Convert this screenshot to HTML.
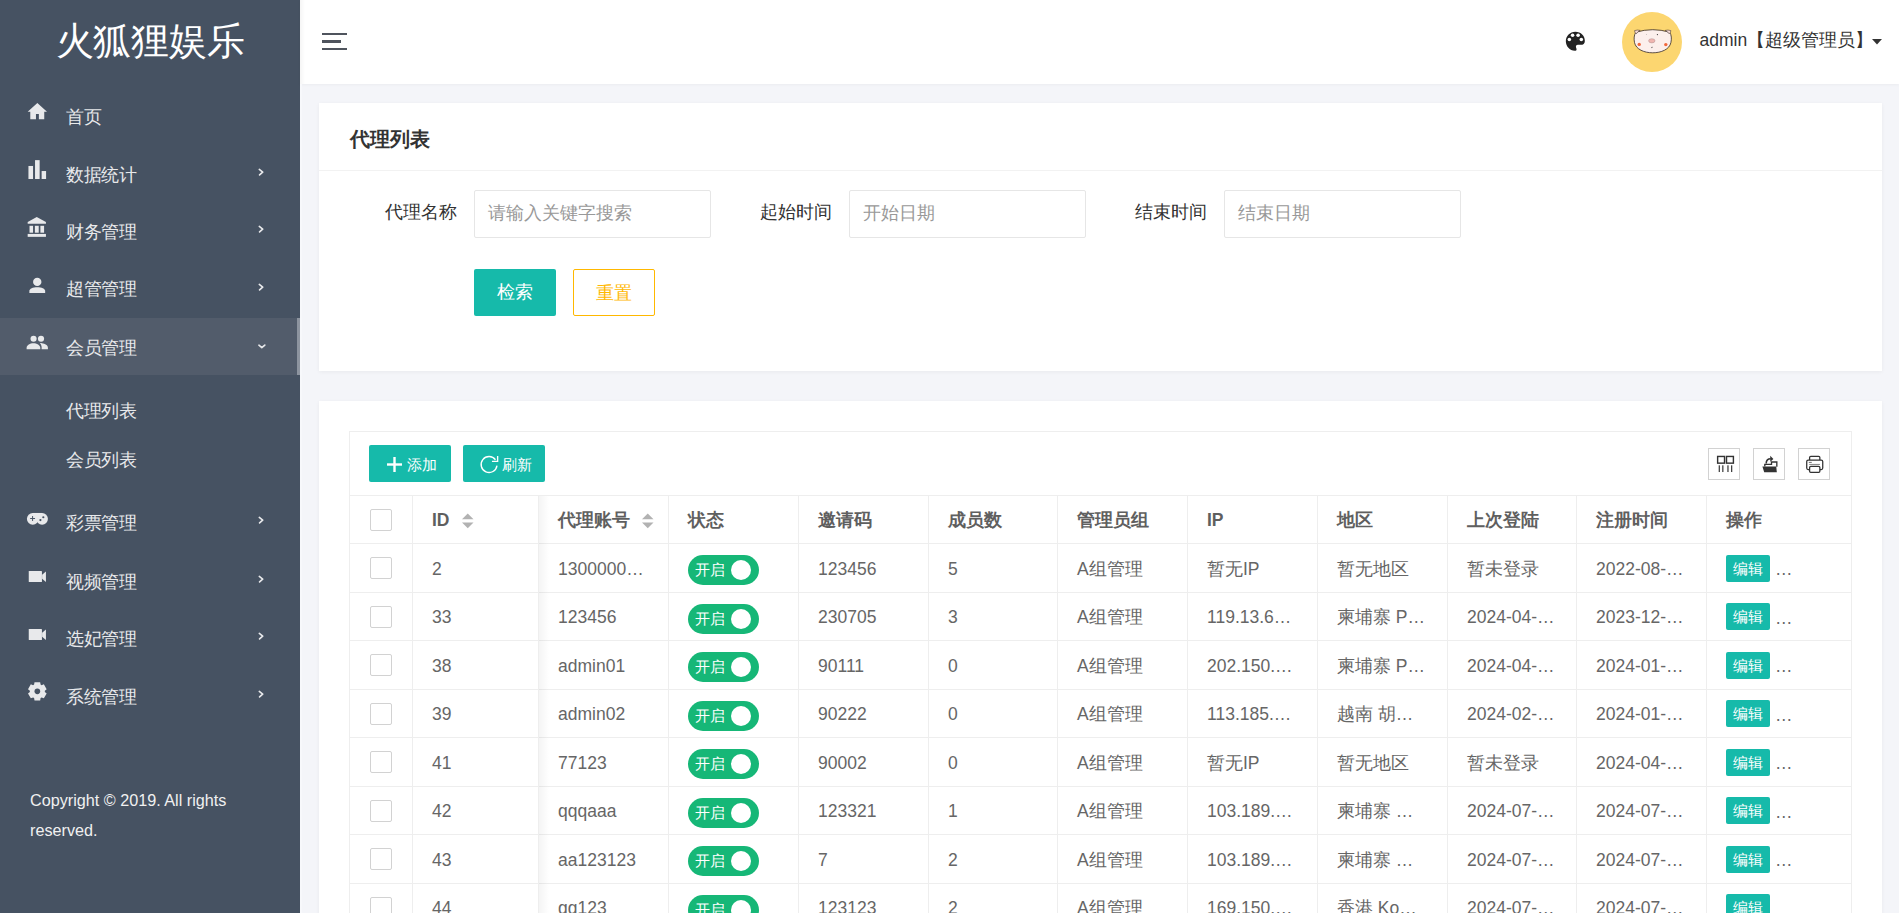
<!DOCTYPE html>
<html><head><meta charset="utf-8">
<style>

*{box-sizing:border-box;margin:0;padding:0}
html,body{width:1899px;height:913px;overflow:hidden}
body{background:#f4f5f9;font-family:"Liberation Sans",sans-serif;color:#666;position:relative}
.abs{position:absolute}
#side{position:absolute;left:0;top:0;width:300px;height:913px;background:#465262;color:#e6e6e6}
#logo{position:absolute;left:0;top:0;width:300px;height:84px;line-height:82px;text-align:center;color:#fff;font-size:38px;letter-spacing:-0.3px}
.mi{position:absolute;left:0;width:300px;height:57px;font-size:17.5px;color:#e8e8e8}
.mi .t{position:absolute;left:66px;top:0;line-height:57px}
.mi svg.ic{position:absolute;left:27px}
.mi .ar{position:absolute;left:257px;top:24px}
.mi.act{background:#535c6b}
.mi.act:after{content:"";position:absolute;right:0;top:0;width:3px;height:100%;background:#8c939e}
.sub{position:absolute;left:66px;font-size:17.5px;color:#e8e8e8;line-height:20px}
#copy{position:absolute;left:30px;top:785px;font-size:16.2px;line-height:30px;color:#f0f0f0;width:240px}
#head{position:absolute;left:300px;top:0;width:1599px;height:84px;background:#fff;box-shadow:0 1px 3px rgba(0,0,0,.04)}
#sideshadow{position:absolute;left:300px;top:0;width:5px;height:913px;background:linear-gradient(90deg,rgba(0,0,0,.035),rgba(0,0,0,0))}
.card{position:absolute;background:#fff;box-shadow:0 1px 4px rgba(0,0,0,.05)}
.lbl{position:absolute;font-size:17.5px;color:#333;line-height:20px}
.inp{position:absolute;height:48px;width:237px;border:1px solid #e6e6e6;border-radius:2px;background:#fff}
.inp span{position:absolute;left:13px;top:10.5px;font-size:17.5px;line-height:22px;color:#999}
.btn{position:absolute;height:47px;width:82px;border-radius:2px;font-size:18px;text-align:center;line-height:46px}
#tbl{position:absolute;left:349px;top:431px;width:1503px;height:500px;border:1px solid #eee;border-right:1px solid #eee}
.hl{position:absolute;height:1px;background:#eee}
.vl{position:absolute;width:1px;background:#eee}
.th{position:absolute;font-size:17.5px;font-weight:bold;color:#5f5f5f;line-height:20px;top:510px}
.td{position:absolute;font-size:17.5px;color:#666;line-height:20px}
.cb{position:absolute;width:22px;height:22px;border:1px solid #d2d2d2;border-radius:2px;background:#fff}
.sw{position:absolute;width:71px;height:30px;border-radius:15px;background:#16b777;color:#fff;font-size:15px;font-weight:500;line-height:30px}
.sw span{position:absolute;left:7px;top:0}
.sw i{position:absolute;left:43px;top:5px;width:20px;height:20px;border-radius:50%;background:#fff}
.eb{position:absolute;width:44px;height:27px;background:#16baaa;color:#fff;font-size:15px;font-weight:500;line-height:28px;text-align:center;border-radius:2px}
.tool{position:absolute;top:448px;width:32px;height:32px;border:1px solid #d2d2d2}

.mt{position:absolute;left:66px;font-size:17.5px;line-height:21px;color:#e8e9eb;white-space:nowrap;letter-spacing:-0.35px}

</style></head><body>
<div id="side">
<div id="logo">火狐狸娱乐</div>
<div class="abs" style="left:0;top:318px;width:300px;height:57px;background:#525c6b"></div>
<div class="abs" style="left:297px;top:318px;width:3px;height:57px;background:#8d949f"></div>
<svg class="abs" style="left:24px;top:98px" width="28" height="28" viewBox="0 0 913 913"><path fill="#e8e9eb" d="M435 160 L750 450 L660 450 L660 690 L485 690 L485 520 L390 520 L390 690 L205 690 L205 450 L120 450 Z"/></svg>
<svg class="abs" style="left:24px;top:156px" width="28" height="28" viewBox="0 0 913 913"><rect fill="#e8e9eb" x="145" y="325" width="150" height="425"/><rect fill="#e8e9eb" x="360" y="135" width="150" height="615"/><rect fill="#e8e9eb" x="575" y="490" width="145" height="260"/></svg>
<svg class="abs" style="left:24px;top:212px" width="28" height="28" viewBox="0 0 913 913"><path fill="#e8e9eb" d="M415 165 L715 330 L715 385 L120 385 L120 330 Z"/><rect fill="#e8e9eb" x="180" y="450" width="115" height="225"/><rect fill="#e8e9eb" x="355" y="450" width="125" height="225"/><rect fill="#e8e9eb" x="535" y="450" width="120" height="225"/><rect fill="#e8e9eb" x="120" y="715" width="595" height="95"/></svg>
<svg class="abs" style="left:24px;top:270px" width="28" height="28" viewBox="0 0 913 913"><circle fill="#e8e9eb" cx="432" cy="388" r="137"/><path fill="#e8e9eb" d="M175 750 L175 680 C175 610 290 560 432 560 C574 560 690 610 690 680 L690 750 Z"/></svg>
<svg class="abs" style="left:24px;top:328px" width="28" height="28" viewBox="0 0 913 913"><circle fill="#e8e9eb" cx="312" cy="352" r="100"/><circle fill="#e8e9eb" cx="555" cy="352" r="100"/><path fill="#e8e9eb" d="M85 695 L85 640 C85 560 200 495 307 495 C415 495 530 560 530 640 L530 695 Z"/><path fill="#e8e9eb" d="M520 495 C540 492 560 492 580 495 C690 505 780 560 780 640 L780 695 L575 695 L575 620 C570 570 555 530 520 495 Z"/></svg>
<svg class="abs" style="left:24px;top:505px" width="28" height="28" viewBox="0 0 913 913"><circle fill="#e8e9eb" cx="285" cy="450" r="190"/><circle fill="#e8e9eb" cx="590" cy="450" r="190"/><rect fill="#e8e9eb" x="285" y="260" width="305" height="190"/><rect fill="#465262" x="200" y="425" width="160" height="32"/><rect fill="#465262" x="264" y="360" width="32" height="160"/><circle fill="#465262" cx="630" cy="400" r="36"/><circle fill="#465262" cx="535" cy="490" r="36"/></svg>
<svg class="abs" style="left:24px;top:560px" width="28" height="28" viewBox="0 0 913 913"><rect fill="#e8e9eb" x="155" y="355" width="430" height="365" rx="20"/><path fill="#e8e9eb" d="M590 480 L715 375 L715 715 L590 610 Z"/></svg>
<svg class="abs" style="left:24px;top:618px" width="28" height="28" viewBox="0 0 913 913"><rect fill="#e8e9eb" x="155" y="355" width="430" height="365" rx="20"/><path fill="#e8e9eb" d="M590 480 L715 375 L715 715 L590 610 Z"/></svg>
<svg class="abs" style="left:24px;top:676px" width="28" height="28" viewBox="0 0 913 913"><path fill="#e8e9eb" d="M540.8 279.0 L527.0 201.9 L343.0 201.9 L329.2 279.0 L296.5 297.9 L222.8 271.3 L130.8 430.6 L190.7 481.1 L190.7 518.9 L130.8 569.4 L222.8 728.7 L296.5 702.1 L329.2 721.0 L343.0 798.1 L527.0 798.1 L540.8 721.0 L573.5 702.1 L647.2 728.7 L739.2 569.4 L679.3 518.9 L679.3 481.1 L739.2 430.6 L647.2 271.3 L573.5 297.9 Z"/><circle fill="#465262" cx="435" cy="500" r="92"/></svg>
<div class="mt" style="top:106.5px">首页</div>
<div class="mt" style="top:165.0px">数据统计</div>
<svg class="abs" style="left:248px;top:160px" width="24" height="24" viewBox="0 0 913 913"><path d="M430 360 L560 465 L440 570" fill="none" stroke="#e8e9eb" stroke-width="62" stroke-linecap="round" stroke-linejoin="round"/></svg>
<div class="mt" style="top:222.2px">财务管理</div>
<svg class="abs" style="left:248px;top:217px" width="24" height="24" viewBox="0 0 913 913"><path d="M430 360 L560 465 L440 570" fill="none" stroke="#e8e9eb" stroke-width="62" stroke-linecap="round" stroke-linejoin="round"/></svg>
<div class="mt" style="top:279.4px">超管管理</div>
<svg class="abs" style="left:248px;top:275px" width="24" height="24" viewBox="0 0 913 913"><path d="M430 360 L560 465 L440 570" fill="none" stroke="#e8e9eb" stroke-width="62" stroke-linecap="round" stroke-linejoin="round"/></svg>
<div class="mt" style="top:337.7px">会员管理</div>
<svg class="abs" style="left:248px;top:334px" width="24" height="24" viewBox="0 0 913 913"><path d="M415 425 L525 520 L640 420" fill="none" stroke="#e8e9eb" stroke-width="62" stroke-linecap="round" stroke-linejoin="round"/></svg>
<div class="mt" style="top:400.7px">代理列表</div>
<div class="mt" style="top:449.7px">会员列表</div>
<div class="mt" style="top:512.8px">彩票管理</div>
<svg class="abs" style="left:248px;top:508px" width="24" height="24" viewBox="0 0 913 913"><path d="M430 360 L560 465 L440 570" fill="none" stroke="#e8e9eb" stroke-width="62" stroke-linecap="round" stroke-linejoin="round"/></svg>
<div class="mt" style="top:572.0px">视频管理</div>
<svg class="abs" style="left:248px;top:567px" width="24" height="24" viewBox="0 0 913 913"><path d="M430 360 L560 465 L440 570" fill="none" stroke="#e8e9eb" stroke-width="62" stroke-linecap="round" stroke-linejoin="round"/></svg>
<div class="mt" style="top:628.5px">选妃管理</div>
<svg class="abs" style="left:248px;top:624px" width="24" height="24" viewBox="0 0 913 913"><path d="M430 360 L560 465 L440 570" fill="none" stroke="#e8e9eb" stroke-width="62" stroke-linecap="round" stroke-linejoin="round"/></svg>
<div class="mt" style="top:687.0px">系统管理</div>
<svg class="abs" style="left:248px;top:682px" width="24" height="24" viewBox="0 0 913 913"><path d="M430 360 L560 465 L440 570" fill="none" stroke="#e8e9eb" stroke-width="62" stroke-linecap="round" stroke-linejoin="round"/></svg>
<div id="copy">Copyright © 2019. All rights reserved.</div>
</div>
<div id="head">
<svg class="abs" style="left:22px;top:33px" width="26" height="18" viewBox="0 0 26 18"><rect fill="#4f545d" x="0" y="0" width="25" height="2"/><rect fill="#4f545d" x="0" y="7" width="19" height="3"/><rect fill="#4f545d" x="0" y="15" width="25" height="2"/></svg>
<svg class="abs" style="left:1262px;top:28px" width="28" height="28" viewBox="0 0 913 913"><path fill="#222" d="M435 120 C620 120 745 250 745 420 C745 500 690 550 610 550 L520 550 C470 550 440 590 460 640 C480 680 490 740 420 740 C250 740 125 590 125 430 C125 260 260 120 435 120 Z"/><circle fill="#fff" cx="345" cy="238" r="58"/><circle fill="#fff" cx="525" cy="238" r="58"/><circle fill="#fff" cx="240" cy="378" r="58"/><circle fill="#fff" cx="630" cy="378" r="58"/></svg>
<svg class="abs" style="left:1322px;top:12px" width="60" height="60" viewBox="0 0 60 60"><circle cx="30" cy="30" r="30" fill="#fcd670"/><path d="M13.9 20.2 Q30.7 15.2 47.6 20.2 C49.6 23 49.7 27 48.9 30.5 C47.6 37.5 39 40.8 30.7 40.8 C22.4 40.8 13.9 37.5 12.5 30.5 C11.8 27 11.9 23 13.9 20.2 Z" fill="#fcefec" stroke="#2a1f1f" stroke-width="0.75"/><path d="M12.6 18.6 Q15.5 17.6 18.2 18.4 Q15.5 19.6 14.3 21.8 Q12.4 20.4 12.6 18.6 Z" fill="#f6d9d6" stroke="#2a1f1f" stroke-width="0.5"/><path d="M48.8 18.6 Q45.9 17.6 43.2 18.4 Q45.9 19.6 47.1 21.8 Q49 20.4 48.8 18.6 Z" fill="#f6d9d6" stroke="#2a1f1f" stroke-width="0.5"/><circle cx="17.2" cy="32.4" r="1.7" fill="#f2663a"/><circle cx="43.8" cy="32.6" r="1.7" fill="#f2663a"/><ellipse cx="29.8" cy="28.8" rx="3.2" ry="2.1" fill="#f0b5b0" stroke="#a08080" stroke-width="0.4"/><circle cx="24.4" cy="22.6" r="0.45" fill="#888"/><circle cx="35.4" cy="22.6" r="0.6" fill="#333"/><path d="M29 35 Q29.9 36.6 30.8 35" fill="none" stroke="#555" stroke-width="0.7"/></svg>
<div class="abs" style="left:1399.5px;top:30px;font-size:17.5px;line-height:20px;color:#333;white-space:nowrap">admin【超级管理员】</div>
<svg class="abs" style="left:1572px;top:38.5px" width="10" height="6" viewBox="0 0 10 6"><path d="M0 0 L10 0 L5 5.5 Z" fill="#333"/></svg>
</div>
<div class="abs" style="left:300px;top:0;width:5px;height:84px;background:linear-gradient(90deg,rgba(0,0,0,.04),rgba(0,0,0,0))"></div>
<div class="abs" style="left:300px;top:84px;width:2px;height:829px;background:#f7f8fb"></div>
<div class="card" style="left:319px;top:103px;width:1563px;height:268px">
<div class="abs" style="left:31px;top:25px;font-size:20px;line-height:22px;font-weight:bold;color:#333">代理列表</div>
<div class="abs" style="left:0;top:67px;width:1563px;height:1px;background:#f2f2f2"></div>
<div class="lbl" style="left:66px;top:99px">代理名称</div>
<div class="inp" style="left:155px;top:87px"><span>请输入关键字搜索</span></div>
<div class="lbl" style="left:441px;top:99px">起始时间</div>
<div class="inp" style="left:530px;top:87px"><span>开始日期</span></div>
<div class="lbl" style="left:816px;top:99px">结束时间</div>
<div class="inp" style="left:905px;top:87px"><span>结束日期</span></div>
<div class="btn" style="left:155px;top:166px;background:#16baaa;color:#fff">检索</div>
<div class="btn" style="left:254px;top:166px;border:1px solid #ffb800;color:#ffb800;background:#fff">重置</div>
</div>
<div class="card" style="left:319px;top:401px;width:1563px;height:520px"></div>
<div class="abs" style="left:349px;top:431px;width:1503px;height:520px;border:1px solid #eee;border-bottom:none"></div>
<div class="abs" style="left:369px;top:445px;width:82px;height:37px;background:#16baaa;border-radius:2px"></div>
<svg class="abs" style="left:387px;top:456.5px" width="15" height="15" viewBox="0 0 15 15"><rect x="6.3" y="0" width="2.4" height="15" fill="#fff"/><rect x="0" y="6.3" width="15" height="2.4" fill="#fff"/></svg>
<div class="abs" style="left:407px;top:454.5px;font-size:15px;line-height:20px;color:#fff">添加</div>
<div class="abs" style="left:463px;top:445px;width:82px;height:37px;background:#16baaa;border-radius:2px"></div>
<svg class="abs" style="left:476px;top:452px" width="26" height="26" viewBox="0 0 913 913"><path d="M737 480 A280 280 0 1 1 683.6 271.5" fill="none" stroke="#fff" stroke-width="48"/><path d="M760 140 L760 330 L560 330" fill="none" stroke="#fff" stroke-width="48"/></svg>
<div class="abs" style="left:501.5px;top:454.5px;font-size:15px;line-height:20px;color:#fff">刷新</div>
<div class="tool" style="left:1708px"></div>
<div class="tool" style="left:1753px"></div>
<div class="tool" style="left:1798px"></div>
<svg class="abs" style="left:1706px;top:446px" width="36" height="36" viewBox="0 0 913 913"><rect x="295" y="265" width="175" height="170" fill="none" stroke="#333" stroke-width="36"/><rect x="520" y="265" width="175" height="170" fill="none" stroke="#333" stroke-width="36"/><rect x="322" y="490" width="30" height="170" fill="#333"/><rect x="412" y="490" width="30" height="170" fill="#333"/><rect x="542" y="490" width="30" height="170" fill="#333"/><rect x="636" y="490" width="30" height="170" fill="#333"/></svg>
<svg class="abs" style="left:1751px;top:446px" width="36" height="36" viewBox="0 0 913 913"><path d="M290 520 L640 520 L655 665 L335 665 Z" fill="#333"/><path d="M350 520 L350 465 L520 465 L520 405 L655 405 L655 525" fill="none" stroke="#333" stroke-width="34"/><path d="M385 445 C385 360 430 320 500 322" fill="none" stroke="#333" stroke-width="40"/><path d="M488 250 L568 328 L488 400 Z" fill="#333"/></svg>
<svg class="abs" style="left:1796px;top:446px" width="36" height="36" viewBox="0 0 913 913"><rect x="345" y="262" width="260" height="110" rx="30" fill="none" stroke="#333" stroke-width="32"/><rect x="272" y="358" width="406" height="240" rx="38" fill="#fff" stroke="#333" stroke-width="32"/><rect x="345" y="518" width="260" height="150" rx="28" fill="#fff" stroke="#333" stroke-width="32"/><rect x="325" y="403" width="75" height="22" fill="#555"/><rect x="335" y="455" width="272" height="20" fill="#666"/></svg>
<div class="hl" style="left:349px;top:495px;width:1503px"></div>
<div class="hl" style="left:349px;top:543px;width:1503px"></div>
<div class="hl" style="left:349px;top:592px;width:1503px"></div>
<div class="hl" style="left:349px;top:640px;width:1503px"></div>
<div class="hl" style="left:349px;top:689px;width:1503px"></div>
<div class="hl" style="left:349px;top:737px;width:1503px"></div>
<div class="hl" style="left:349px;top:786px;width:1503px"></div>
<div class="hl" style="left:349px;top:834px;width:1503px"></div>
<div class="hl" style="left:349px;top:883px;width:1503px"></div>
<div class="vl" style="left:412px;top:495px;height:420px"></div>
<div class="vl" style="left:538px;top:495px;height:420px"></div>
<div class="vl" style="left:668px;top:495px;height:420px"></div>
<div class="vl" style="left:798px;top:495px;height:420px"></div>
<div class="vl" style="left:928px;top:495px;height:420px"></div>
<div class="vl" style="left:1057px;top:495px;height:420px"></div>
<div class="vl" style="left:1187px;top:495px;height:420px"></div>
<div class="vl" style="left:1317px;top:495px;height:420px"></div>
<div class="vl" style="left:1447px;top:495px;height:420px"></div>
<div class="vl" style="left:1576px;top:495px;height:420px"></div>
<div class="vl" style="left:1706px;top:495px;height:420px"></div>
<div class="abs" style="left:539px;top:496px;width:10px;height:420px;background:linear-gradient(90deg,rgba(0,0,0,.045),rgba(0,0,0,0))"></div>
<div class="th" style="left:432px">ID</div>
<div class="th" style="left:558px">代理账号</div>
<div class="th" style="left:688px">状态</div>
<div class="th" style="left:818px">邀请码</div>
<div class="th" style="left:948px">成员数</div>
<div class="th" style="left:1077px">管理员组</div>
<div class="th" style="left:1207px">IP</div>
<div class="th" style="left:1337px">地区</div>
<div class="th" style="left:1467px">上次登陆</div>
<div class="th" style="left:1596px">注册时间</div>
<div class="th" style="left:1726px">操作</div>
<svg class="abs" style="left:462.1px;top:511.5px" width="12" height="17" viewBox="0 0 12 17"><path d="M5.75 1.5 L11.5 7.3 L0 7.3 Z" fill="#b2b2b2"/><path d="M0 10.4 L11.5 10.4 L5.75 16.2 Z" fill="#b2b2b2"/></svg>
<svg class="abs" style="left:642.1px;top:511.5px" width="12" height="17" viewBox="0 0 12 17"><path d="M5.75 1.5 L11.5 7.3 L0 7.3 Z" fill="#b2b2b2"/><path d="M0 10.4 L11.5 10.4 L5.75 16.2 Z" fill="#b2b2b2"/></svg>
<div class="cb" style="left:370px;top:509px"></div>
<div class="cb" style="left:370px;top:556.5px"></div>
<div class="td" style="left:432px;top:558.60px;white-space:nowrap">2</div>
<div class="td" style="left:558px;top:558.60px;white-space:nowrap">1300000…</div>
<div class="sw" style="left:688px;top:555px"><span>开启</span><i></i></div>
<div class="td" style="left:818px;top:558.60px;white-space:nowrap">123456</div>
<div class="td" style="left:948px;top:558.60px;white-space:nowrap">5</div>
<div class="td" style="left:1077px;top:558.60px;white-space:nowrap">A组管理</div>
<div class="td" style="left:1207px;top:558.60px;white-space:nowrap">暂无IP</div>
<div class="td" style="left:1337px;top:558.60px;white-space:nowrap">暂无地区</div>
<div class="td" style="left:1467px;top:558.60px;white-space:nowrap">暂未登录</div>
<div class="td" style="left:1596px;top:558.60px;white-space:nowrap">2022-08-…</div>
<div class="eb" style="left:1726px;top:554.60px">编辑</div>
<div class="td" style="left:1775px;top:559.20px">…</div>
<div class="cb" style="left:370px;top:605.5px"></div>
<div class="td" style="left:432px;top:607.10px;white-space:nowrap">33</div>
<div class="td" style="left:558px;top:607.10px;white-space:nowrap">123456</div>
<div class="sw" style="left:688px;top:604px"><span>开启</span><i></i></div>
<div class="td" style="left:818px;top:607.10px;white-space:nowrap">230705</div>
<div class="td" style="left:948px;top:607.10px;white-space:nowrap">3</div>
<div class="td" style="left:1077px;top:607.10px;white-space:nowrap">A组管理</div>
<div class="td" style="left:1207px;top:607.10px;white-space:nowrap">119.13.6…</div>
<div class="td" style="left:1337px;top:607.10px;white-space:nowrap">柬埔寨 P…</div>
<div class="td" style="left:1467px;top:607.10px;white-space:nowrap">2024-04-…</div>
<div class="td" style="left:1596px;top:607.10px;white-space:nowrap">2023-12-…</div>
<div class="eb" style="left:1726px;top:603.10px">编辑</div>
<div class="td" style="left:1775px;top:607.70px">…</div>
<div class="cb" style="left:370px;top:653.5px"></div>
<div class="td" style="left:432px;top:655.60px;white-space:nowrap">38</div>
<div class="td" style="left:558px;top:655.60px;white-space:nowrap">admin01</div>
<div class="sw" style="left:688px;top:652px"><span>开启</span><i></i></div>
<div class="td" style="left:818px;top:655.60px;white-space:nowrap">90111</div>
<div class="td" style="left:948px;top:655.60px;white-space:nowrap">0</div>
<div class="td" style="left:1077px;top:655.60px;white-space:nowrap">A组管理</div>
<div class="td" style="left:1207px;top:655.60px;white-space:nowrap">202.150.…</div>
<div class="td" style="left:1337px;top:655.60px;white-space:nowrap">柬埔寨 P…</div>
<div class="td" style="left:1467px;top:655.60px;white-space:nowrap">2024-04-…</div>
<div class="td" style="left:1596px;top:655.60px;white-space:nowrap">2024-01-…</div>
<div class="eb" style="left:1726px;top:651.60px">编辑</div>
<div class="td" style="left:1775px;top:656.20px">…</div>
<div class="cb" style="left:370px;top:702.5px"></div>
<div class="td" style="left:432px;top:704.10px;white-space:nowrap">39</div>
<div class="td" style="left:558px;top:704.10px;white-space:nowrap">admin02</div>
<div class="sw" style="left:688px;top:701px"><span>开启</span><i></i></div>
<div class="td" style="left:818px;top:704.10px;white-space:nowrap">90222</div>
<div class="td" style="left:948px;top:704.10px;white-space:nowrap">0</div>
<div class="td" style="left:1077px;top:704.10px;white-space:nowrap">A组管理</div>
<div class="td" style="left:1207px;top:704.10px;white-space:nowrap">113.185.…</div>
<div class="td" style="left:1337px;top:704.10px;white-space:nowrap">越南 胡…</div>
<div class="td" style="left:1467px;top:704.10px;white-space:nowrap">2024-02-…</div>
<div class="td" style="left:1596px;top:704.10px;white-space:nowrap">2024-01-…</div>
<div class="eb" style="left:1726px;top:700.10px">编辑</div>
<div class="td" style="left:1775px;top:704.70px">…</div>
<div class="cb" style="left:370px;top:750.5px"></div>
<div class="td" style="left:432px;top:752.60px;white-space:nowrap">41</div>
<div class="td" style="left:558px;top:752.60px;white-space:nowrap">77123</div>
<div class="sw" style="left:688px;top:749px"><span>开启</span><i></i></div>
<div class="td" style="left:818px;top:752.60px;white-space:nowrap">90002</div>
<div class="td" style="left:948px;top:752.60px;white-space:nowrap">0</div>
<div class="td" style="left:1077px;top:752.60px;white-space:nowrap">A组管理</div>
<div class="td" style="left:1207px;top:752.60px;white-space:nowrap">暂无IP</div>
<div class="td" style="left:1337px;top:752.60px;white-space:nowrap">暂无地区</div>
<div class="td" style="left:1467px;top:752.60px;white-space:nowrap">暂未登录</div>
<div class="td" style="left:1596px;top:752.60px;white-space:nowrap">2024-04-…</div>
<div class="eb" style="left:1726px;top:748.60px">编辑</div>
<div class="td" style="left:1775px;top:753.20px">…</div>
<div class="cb" style="left:370px;top:799.5px"></div>
<div class="td" style="left:432px;top:801.10px;white-space:nowrap">42</div>
<div class="td" style="left:558px;top:801.10px;white-space:nowrap">qqqaaa</div>
<div class="sw" style="left:688px;top:798px"><span>开启</span><i></i></div>
<div class="td" style="left:818px;top:801.10px;white-space:nowrap">123321</div>
<div class="td" style="left:948px;top:801.10px;white-space:nowrap">1</div>
<div class="td" style="left:1077px;top:801.10px;white-space:nowrap">A组管理</div>
<div class="td" style="left:1207px;top:801.10px;white-space:nowrap">103.189.…</div>
<div class="td" style="left:1337px;top:801.10px;white-space:nowrap">柬埔寨 …</div>
<div class="td" style="left:1467px;top:801.10px;white-space:nowrap">2024-07-…</div>
<div class="td" style="left:1596px;top:801.10px;white-space:nowrap">2024-07-…</div>
<div class="eb" style="left:1726px;top:797.10px">编辑</div>
<div class="td" style="left:1775px;top:801.70px">…</div>
<div class="cb" style="left:370px;top:847.5px"></div>
<div class="td" style="left:432px;top:849.60px;white-space:nowrap">43</div>
<div class="td" style="left:558px;top:849.60px;white-space:nowrap">aa123123</div>
<div class="sw" style="left:688px;top:846px"><span>开启</span><i></i></div>
<div class="td" style="left:818px;top:849.60px;white-space:nowrap">7</div>
<div class="td" style="left:948px;top:849.60px;white-space:nowrap">2</div>
<div class="td" style="left:1077px;top:849.60px;white-space:nowrap">A组管理</div>
<div class="td" style="left:1207px;top:849.60px;white-space:nowrap">103.189.…</div>
<div class="td" style="left:1337px;top:849.60px;white-space:nowrap">柬埔寨 …</div>
<div class="td" style="left:1467px;top:849.60px;white-space:nowrap">2024-07-…</div>
<div class="td" style="left:1596px;top:849.60px;white-space:nowrap">2024-07-…</div>
<div class="eb" style="left:1726px;top:845.60px">编辑</div>
<div class="td" style="left:1775px;top:850.20px">…</div>
<div class="cb" style="left:370px;top:896.5px"></div>
<div class="td" style="left:432px;top:898.10px;white-space:nowrap">44</div>
<div class="td" style="left:558px;top:898.10px;white-space:nowrap">qq123</div>
<div class="sw" style="left:688px;top:895px"><span>开启</span><i></i></div>
<div class="td" style="left:818px;top:898.10px;white-space:nowrap">123123</div>
<div class="td" style="left:948px;top:898.10px;white-space:nowrap">2</div>
<div class="td" style="left:1077px;top:898.10px;white-space:nowrap">A组管理</div>
<div class="td" style="left:1207px;top:898.10px;white-space:nowrap">169.150.…</div>
<div class="td" style="left:1337px;top:898.10px;white-space:nowrap">香港 Ko…</div>
<div class="td" style="left:1467px;top:898.10px;white-space:nowrap">2024-07-…</div>
<div class="td" style="left:1596px;top:898.10px;white-space:nowrap">2024-07-…</div>
<div class="eb" style="left:1726px;top:894.10px">编辑</div>
<div class="td" style="left:1775px;top:898.70px">…</div>
</body></html>
